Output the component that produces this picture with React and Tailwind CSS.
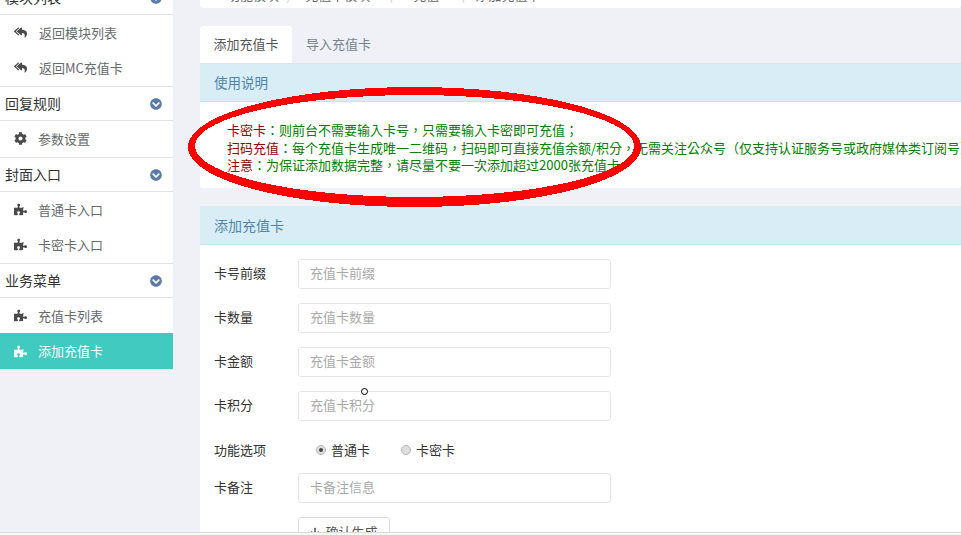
import React from 'react'
import { FaReplyAll, FaCog, FaPuzzlePiece, FaChevronCircleDown, FaArrowDown, FaHome } from 'react-icons/fa'

const menu = [
  { title: '模块列表', items: [
    { icon: FaReplyAll, label: '返回模块列表', textClass: 'ml-[12px]' },
    { icon: FaReplyAll, label: '返回MC充值卡', textClass: 'ml-[12px]' },
  ] },
  { title: '回复规则', items: [{ icon: FaCog, label: '参数设置' }] },
  { title: '封面入口', items: [
    { icon: FaPuzzlePiece, label: '普通卡入口' },
    { icon: FaPuzzlePiece, label: '卡密卡入口' },
  ] },
  { title: '业务菜单', items: [
    { icon: FaPuzzlePiece, label: '充值卡列表' },
    { icon: FaPuzzlePiece, label: '添加充值卡', active: true },
  ] },
]

const fields = [
  { label: '卡号前缀', placeholder: '充值卡前缀' },
  { label: '卡数量', placeholder: '充值卡数量' },
  { label: '卡金额', placeholder: '充值卡金额' },
  { label: '卡积分', placeholder: '充值卡积分' },
]

const notes = [
  { label: '卡密卡', text: '：则前台不需要输入卡号，只需要输入卡密即可充值；' },
  { label: '扫码充值', text: '：每个充值卡生成唯一二维码，扫码即可直接充值余额/积分，无需关注公众号（仅支持认证服务号或政府媒体类订阅号）' },
  { label: '注意', text: '：为保证添加数据完整，请尽量不要一次添加超过2000张充值卡' },
]

const Field = ({ label, placeholder, className = '' }) => (
  <div className={`flex items-center ${className}`}>
    <label className="w-[84px] shrink-0 pb-[2px] text-[13px] text-[#333]">{label}</label>
    <input
      readOnly
      placeholder={placeholder}
      className="h-[30px] w-[313px] rounded-[3px] border border-[#e5e6e7] bg-white px-[11px] pb-[3px] text-[13px] placeholder:text-[#a9a9a9] outline-none"
    />
  </div>
)

const Radio = ({ label, checked }) => (
  <div className="flex items-center gap-[5px]">
    <span className="flex h-[10px] w-[10px] items-center justify-center rounded-full border border-[#b5b5b5] bg-[#dedede]">
      {checked && <span className="h-[4px] w-[4px] rounded-full bg-[#444]"></span>}
    </span>
    <span className="text-[13px] text-[#333]">{label}</span>
  </div>
)

const Sidebar = () => (
  <aside className="-mt-[20px] w-[173px] shrink-0 self-start border-b border-[#d5eeee] bg-white">
    {menu.map((group, i) => (
      <div key={group.title}>
        <div className="flex h-[34px] items-center justify-between border-t border-[#e2e2e2] pl-[5px] pr-[11px] text-[14px] text-[#333]">
          <span>{group.title}</span>
          <FaChevronCircleDown className="text-[12px] text-[#5b7aa8]" />
        </div>
        <div className={`border-t border-[#e2e2e2] ${i === menu.length - 1 ? '' : 'pb-[1px]'}`}>
          {group.items.map((item) => {
            const Icon = item.icon
            return (
              <div
                key={item.label}
                className={`flex items-center pl-[14px] text-[13px] ${item.active ? 'h-[36px] bg-[#41cac0] text-white' : 'h-[35px] text-[#676a6c]'}`}
              >
                <Icon className={`w-[13px] text-[13px] ${item.active ? 'text-white' : 'text-[#4a4a4a]'}`} />
                <span className={item.textClass || 'ml-[11px]'}>{item.label}</span>
              </div>
            )
          })}
        </div>
      </div>
    ))}
  </aside>
)

const Main = () => (
  <main className="ml-[27px] min-w-0 flex-1 overflow-hidden">
    {/* breadcrumb, mostly scrolled off */}
    <div className="-mt-[20px] flex h-[28px] items-end rounded-b-[3px] bg-white pb-[7px] pl-[10px] text-[13px] leading-[13px] text-[#676a6c]">
      <FaHome className="text-[12px]" />
      <span className="ml-[5px]">功能模块</span>
      <span className="ml-[8px] text-[#ccc]">/</span>
      <span className="ml-[13px]">充值卡模块</span>
      <span className="ml-[20px] text-[#ccc]">/</span>
      <span className="ml-[18px]">充值</span>
      <span className="ml-[23px] text-[#ccc]">/</span>
      <span className="ml-[8px]">添加充值卡</span>
    </div>

    <div className="mt-[18px] flex h-[37px] text-[13px]">
      <div className="flex w-[92px] items-center justify-center rounded-t-[3px] bg-white pb-[2px] text-[#555]">添加充值卡</div>
      <div className="flex items-center pb-[2px] pl-[14px] text-[#76838f]">导入充值卡</div>
    </div>

    <section className="rounded-b-[3px] bg-white">
      <div className="flex h-[39px] items-center border-y border-t-[#e2e2e2] border-b-[#bce8f1] bg-[#d9edf7] pl-[14px] text-[13.5px] text-[#4f86a8]">使用说明</div>
      <div className="h-[86px] whitespace-nowrap pl-[27px] pt-[19px] font-['Noto_Sans_CJK_TC','Noto_Sans_CJK_SC',sans-serif] text-[13px] leading-[17.5px] text-[#008000]">
        {notes.map((note) => (
          <div key={note.label}>
            <span className="text-[#990000]">{note.label}</span>
            {note.text}
          </div>
        ))}
      </div>
    </section>

    <section className="mt-[18px] h-[326px] overflow-hidden bg-white">
      <div className="flex h-[39px] items-center border-b border-[#bce8f1] bg-[#d9edf7] pl-[14px] text-[14px] text-[#4f86a8]">添加充值卡</div>
      <div className="pl-[14px] pt-[14px]">
        <div className="flex flex-col gap-[14px]">
          {fields.map((field) => (
            <Field key={field.label} {...field} />
          ))}
        </div>
        <div className="mt-[19px] flex h-[20px] items-center">
          <label className="w-[102px] shrink-0 text-[13px] text-[#333]">功能选项</label>
          <Radio label="普通卡" checked />
          <div className="ml-[31px]">
            <Radio label="卡密卡" />
          </div>
        </div>
        <Field label="卡备注" placeholder="卡备注信息" className="mt-[13px]" />
        <button className="ml-[84px] mt-[14px] flex h-[30px] w-[92px] items-center justify-center gap-[5px] rounded-[3px] border border-[#ddd] bg-white text-[13px] text-[#555]">
          <FaArrowDown className="text-[10px]" />
          确认生成
        </button>
      </div>
    </section>
  </main>
)

export default function App() {
  return (
    <div className="relative flex h-[535px] w-[961px] flex-col overflow-hidden bg-[#f0f1f6] font-['Noto_Sans_CJK_SC','Noto_Sans',sans-serif]">
      <div className="flex h-[532px] shrink-0">
        <Sidebar />
        <Main />
      </div>
      <div className="h-[3px] shrink-0 border-t border-[#dcdcdc] bg-[#f7f7f7]"></div>

      {/* hand drawn annotation on top of the screenshot, thicker along the bottom */}
      <svg className="pointer-events-none absolute left-0 top-0" width="961" height="535" shapeRendering="crispEdges">
        <path
          fill="#ff0000"
          fillRule="evenodd"
          d="M188 147a226.5 60 0 1 0 453 0a226.5 60 0 1 0-453 0Z M195 146a219.5 51 0 1 0 439 0a219.5 51 0 1 0-439 0Z"
        />
      </svg>
      {/* mouse cursor */}
      <span className="absolute left-[361px] top-[388px] h-[7px] w-[7px] rounded-full border border-black bg-white"></span>
    </div>
  )
}
